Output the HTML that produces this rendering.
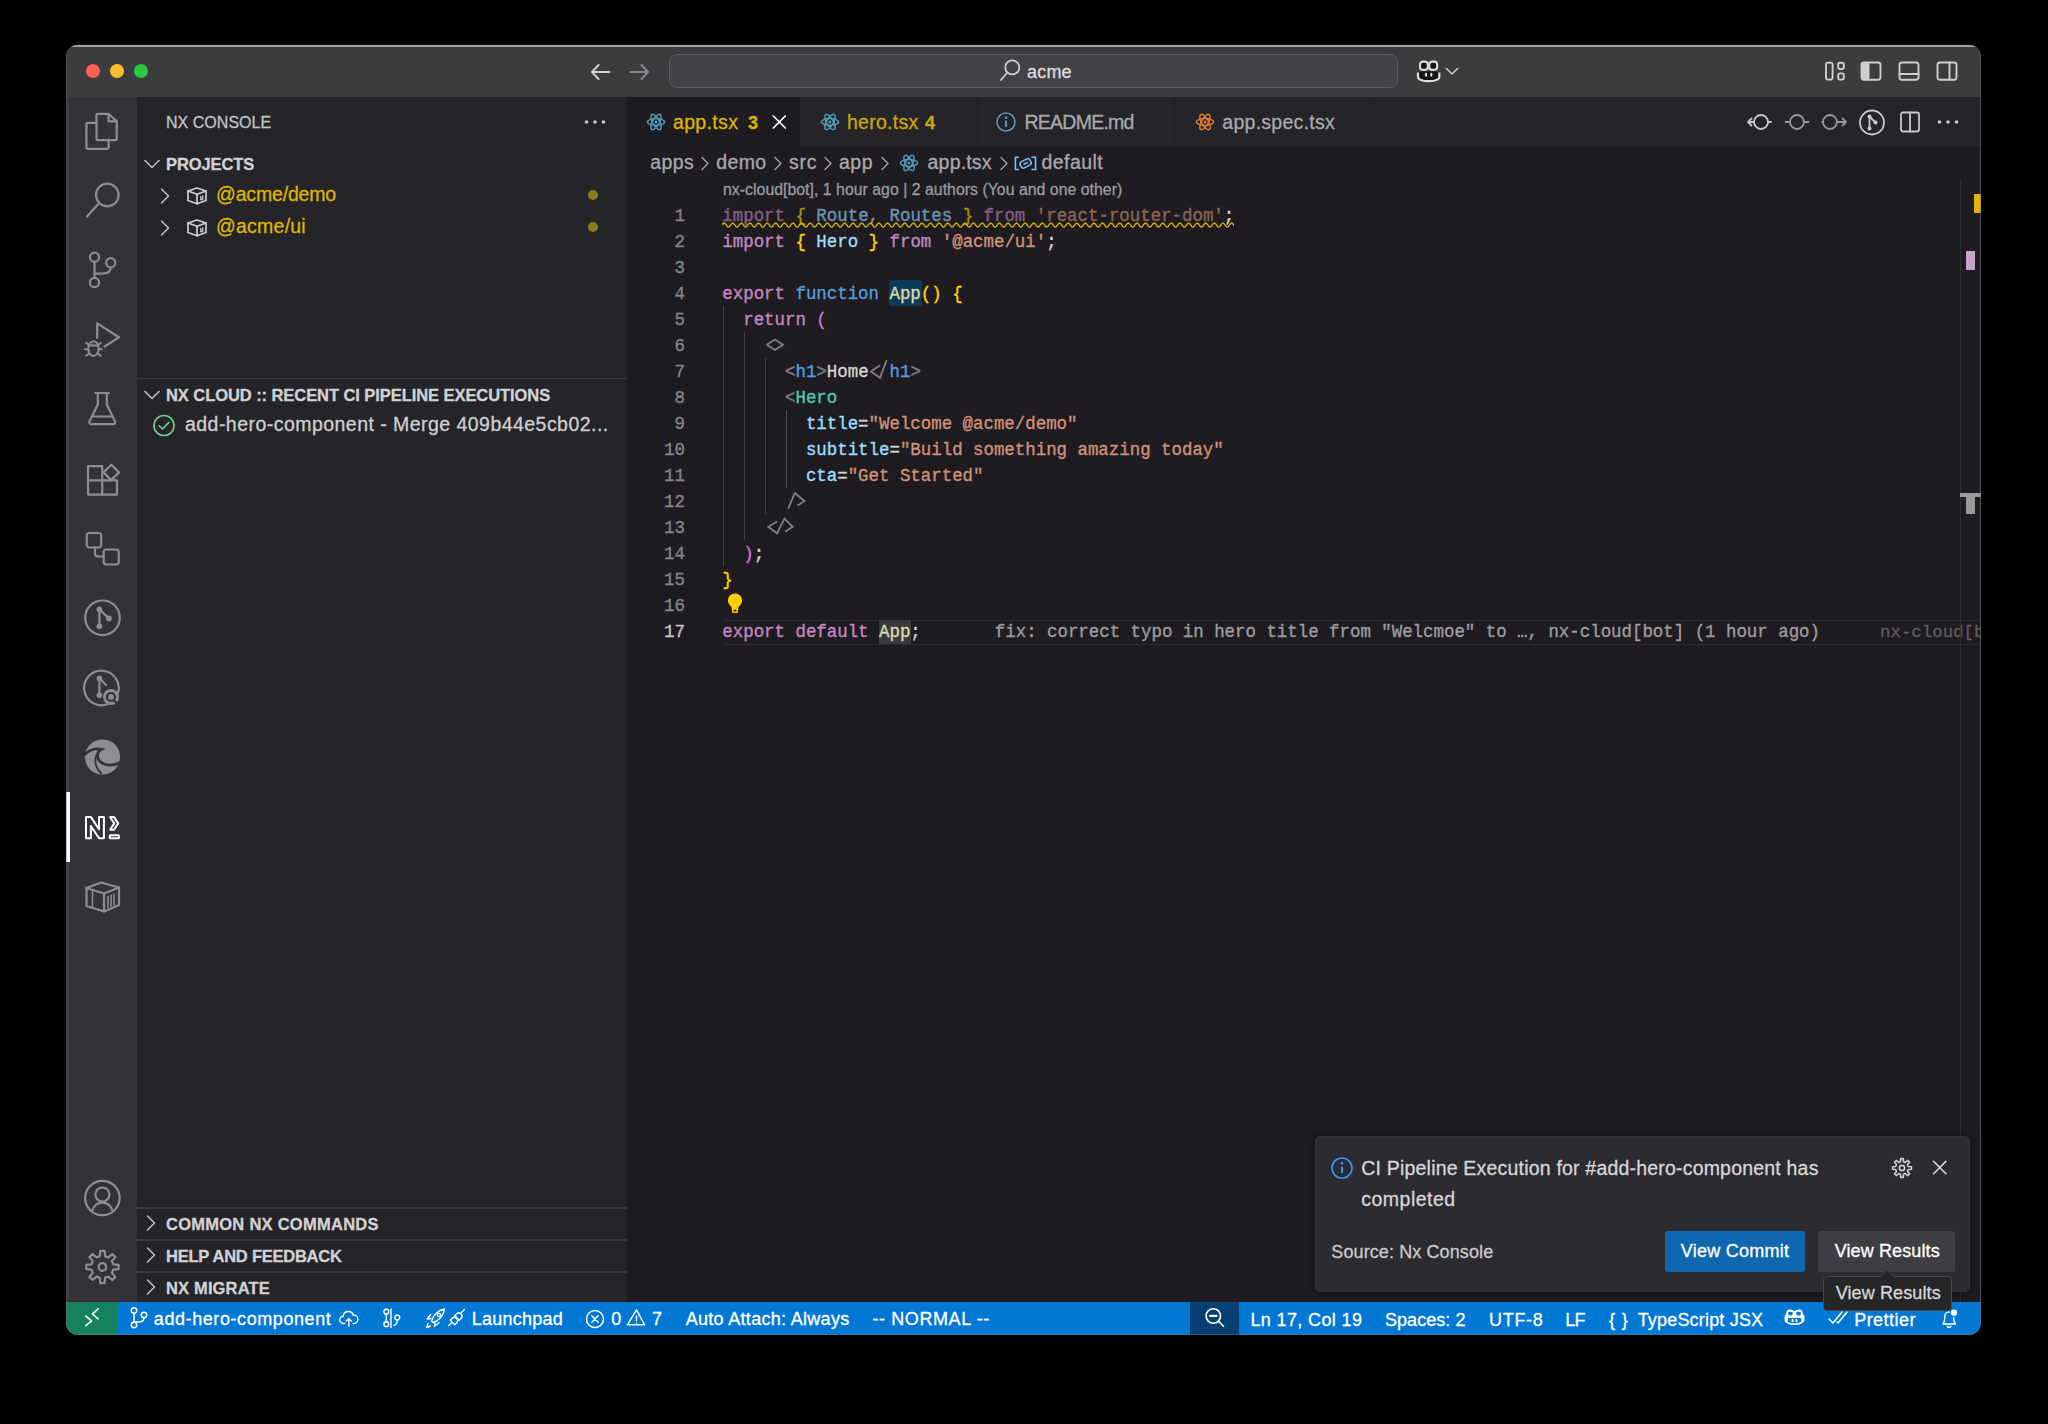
<!DOCTYPE html><html><head><meta charset="utf-8"><style>
html,body{margin:0;padding:0}
body{width:2048px;height:1424px;background:#000;overflow:hidden;position:relative;font-family:"Liberation Sans",sans-serif}
#win{position:absolute;left:0;top:0;width:2048px;height:1424px;clip-path:inset(44.8px 67px 89px 66px round 12px)}
.a{position:absolute}
.t{position:absolute;white-space:pre;line-height:1;-webkit-text-stroke:0.3px currentColor}
.m{-webkit-text-stroke:0.35px currentColor}
.m span{-webkit-text-stroke:0.35px currentColor}
</style></head><body><div id="win">
<div class="a" style="left:66px;top:44px;width:1915px;height:53px;background:#3c3b3e;"></div>
<div class="a" style="left:66px;top:97px;width:71px;height:1205px;background:#343236;"></div>
<div class="a" style="left:137px;top:97px;width:490px;height:1205px;background:#252428;"></div>
<div class="a" style="left:627px;top:97px;width:1354px;height:1205px;background:#1e1c20;"></div>
<div class="a" style="left:627px;top:97px;width:1354px;height:50px;background:#252428;"></div>
<div class="a" style="left:66px;top:44.8px;width:1915px;height:2.200000000000003px;background:#9e9da1;"></div>
<svg class="a" style="left:85px;top:63px;" width="16" height="16" viewBox="0 0 16 16" fill="none"><circle cx="8" cy="8" r="7" fill="#ff5f57"/></svg>
<svg class="a" style="left:109px;top:63px;" width="16" height="16" viewBox="0 0 16 16" fill="none"><circle cx="8" cy="8" r="7" fill="#febc2e"/></svg>
<svg class="a" style="left:133px;top:63px;" width="16" height="16" viewBox="0 0 16 16" fill="none"><circle cx="8" cy="8" r="7" fill="#28c840"/></svg>
<svg class="a" style="left:588px;top:60px;" width="26" height="24" viewBox="0 0 26 24" fill="none"><g stroke="#d0d0d2" stroke-width="2.0" stroke-linecap="round" stroke-linejoin="round" fill="none"><path d="M4 12H21.5M4 12L10.5 5M4 12L10.5 19"/></g></svg>
<svg class="a" style="left:626px;top:60px;" width="26" height="24" viewBox="0 0 26 24" fill="none"><g stroke="#8a898d" stroke-width="2.0" stroke-linecap="round" stroke-linejoin="round" fill="none"><path d="M22 12H4.5M22 12L15.5 5M22 12L15.5 19"/></g></svg>
<div class="a" style="left:669px;top:54px;width:727px;height:32px;border-radius:8px;background:#434246;border:1.5px solid #5b5a5f"></div>
<svg class="a" style="left:998px;top:57px;" width="24" height="26" viewBox="0 0 24 26" fill="none"><g stroke="#cfcfd1" stroke-width="1.8" stroke-linecap="round" stroke-linejoin="round" fill="none"><circle cx="14.3" cy="10.4" r="7"/><path d="M9.3 15.5L3 23"/></g></svg>
<div id="t6c20286c" class="t" style="left:1027.00px;top:62.96px;font-size:18px;color:#dededf;font-weight:400;font-family:'Liberation Sans',sans-serif;letter-spacing:0.195px;">acme</div>
<svg class="a" style="left:1414px;top:58px;" width="30" height="26" viewBox="0 0 30 26" fill="none"><path d="M4 14.5V19.2C4 21.2 8.5 23.2 14.6 23.2S25.3 21.2 25.3 19.2V14.5" stroke="#dcdcde" stroke-width="2.2" fill="#151517"/>
<path d="M6 13.5H23.3V20c-2 1.3-5 2-8.65 2S8 21.3 6 20z" fill="#151517"/>
<rect x="6" y="3.6" width="7.8" height="8.3" rx="2.8" stroke="#dcdcde" stroke-width="2.1" fill="#151517"/>
<rect x="15.3" y="3.6" width="7.8" height="8.3" rx="2.8" stroke="#dcdcde" stroke-width="2.1" fill="#151517"/>
<rect x="10.9" y="14.8" width="2.1" height="4" rx="1" fill="#dcdcde"/><rect x="16.3" y="14.8" width="2.1" height="4" rx="1" fill="#dcdcde"/></svg>
<svg class="a" style="left:1444px;top:64px;" width="16" height="14" viewBox="0 0 16 14" fill="none"><g stroke="#c8c8ca" stroke-width="1.6" stroke-linecap="round" stroke-linejoin="round" fill="none"><path d="M2.5 4.5L8 10L13.5 4.5"/></g></svg>
<svg class="a" style="left:1822px;top:58px;" width="26" height="26" viewBox="0 0 26 26" fill="none"><g stroke="#cfcfd1" stroke-width="1.9" stroke-linecap="round" stroke-linejoin="round" fill="none"><rect x="4" y="4.6" width="6.6" height="17" rx="2"/><rect x="16.2" y="4.8" width="5.6" height="6.2" rx="1.8"/><rect x="16.2" y="15.4" width="5.6" height="6.2" rx="1.8"/></g></svg>
<svg class="a" style="left:1858px;top:58px;" width="26" height="26" viewBox="0 0 26 26" fill="none"><rect x="3.5" y="4.5" width="19" height="17.2" rx="2.5" stroke="#cfcfd1" stroke-width="1.9"/><rect x="3.5" y="4.5" width="8" height="17.2" rx="2" fill="#cfcfd1"/></svg>
<svg class="a" style="left:1896px;top:58px;" width="26" height="26" viewBox="0 0 26 26" fill="none"><g stroke="#cfcfd1" stroke-width="1.9" stroke-linecap="round" stroke-linejoin="round" fill="none"><rect x="3.5" y="4.5" width="19" height="17.2" rx="2.5"/><path d="M3.5 16H22.5"/></g></svg>
<svg class="a" style="left:1934px;top:58px;" width="26" height="26" viewBox="0 0 26 26" fill="none"><g stroke="#cfcfd1" stroke-width="1.9" stroke-linecap="round" stroke-linejoin="round" fill="none"><rect x="3.5" y="4.5" width="19" height="17.2" rx="2.5"/><path d="M15.5 4.5V21.7"/></g></svg>
<div class="a" style="left:66px;top:97px;width:1px;height:1205px;background:#0c0c0d;"></div>
<div class="a" style="left:67px;top:97px;width:2px;height:1205px;background:#403f43;"></div>
<div class="a" style="left:1979.5px;top:97px;width:1.5px;height:1205px;background:#3a393d;"></div>
<svg class="a" style="left:82px;top:111px;" width="40" height="40" viewBox="0 0 40 40" fill="none"><g stroke="#8e8d91" stroke-width="2.2" stroke-linecap="round" stroke-linejoin="round" fill="none"><path d="M14.5 10.3V4a1.2 1.2 0 0 1 1.2-1.2h10.8l8.2 7.6v17.6a1.2 1.2 0 0 1-1.2 1.2H15.7a1.2 1.2 0 0 1-1.2-1.2z"/><path d="M26.5 3v7.3h8"/><path d="M14.5 11.8H5.6a1.2 1.2 0 0 0-1.2 1.2v23.6a1.2 1.2 0 0 0 1.2 1.2h19.8a1.2 1.2 0 0 0 1.2-1.2v-7.9"/></g></svg>
<svg class="a" style="left:82px;top:180px;" width="40" height="40" viewBox="0 0 40 40" fill="none"><g stroke="#8e8d91" stroke-width="2.2" stroke-linecap="round" stroke-linejoin="round" fill="none"><circle cx="25.3" cy="15" r="11.3"/><path d="M17.3 23L5 36.5"/></g></svg>
<svg class="a" style="left:82px;top:250px;" width="40" height="40" viewBox="0 0 40 40" fill="none"><g stroke="#8e8d91" stroke-width="2.2" stroke-linecap="round" stroke-linejoin="round" fill="none"><circle cx="12.5" cy="7.3" r="4.6"/><circle cx="12.5" cy="32.5" r="4.6"/><circle cx="28.7" cy="12.7" r="4.6"/><path d="M12.5 11.9V27.9"/><path d="M28.7 17.3c0 5-3.5 6.3-8 6.3h-8"/></g></svg>
<svg class="a" style="left:82px;top:319px;" width="40" height="40" viewBox="0 0 40 40" fill="none"><g stroke="#8e8d91" stroke-width="2.2" stroke-linecap="round" stroke-linejoin="round" fill="none"><path d="M15.2 19V4.4L37 18.3L22.6 27.5"/><g stroke-width="2"><ellipse cx="11.5" cy="29.6" rx="5.2" ry="7.3"/><path d="M6.5 26.6H16.5M4.2 23.8L7 26.2M18.8 23.8L16 26.2M3 30.2H6.3M16.7 30.2H20M4.2 36.8L7 34.4M18.8 36.8L16 34.4"/></g></g></svg>
<svg class="a" style="left:82px;top:389px;" width="40" height="40" viewBox="0 0 40 40" fill="none"><g stroke="#8e8d91" stroke-width="2.2" stroke-linecap="round" stroke-linejoin="round" fill="none"><path d="M13.5 4H27"/><path d="M15.8 4V15.5L7.5 32.5a1.8 1.8 0 0 0 1.6 2.6h22.3a1.8 1.8 0 0 0 1.6-2.6L24.8 15.5V4"/><path d="M11 27.5H29.5"/></g></svg>
<svg class="a" style="left:82px;top:458px;" width="40" height="40" viewBox="0 0 40 40" fill="none"><g stroke="#8e8d91" stroke-width="2.2" stroke-linecap="round" stroke-linejoin="round" fill="none"><path d="M6 8.1H20.2V36.6H6Z"/><path d="M6 22.3H35V36.6H20.2"/><path d="M29.3 6.7L37 14.4L29.3 22.1L21.6 14.4Z"/></g></svg>
<svg class="a" style="left:82px;top:528px;" width="40" height="40" viewBox="0 0 40 40" fill="none"><g stroke="#8e8d91" stroke-width="2.2" stroke-linecap="round" stroke-linejoin="round" fill="none"><rect x="4.7" y="5" width="14.5" height="14.5" rx="2.5"/><rect x="21.7" y="21.5" width="15" height="15" rx="2.5"/><path d="M13 19.5v6a3 3 0 0 0 3 3h5.7"/></g></svg>
<svg class="a" style="left:82px;top:597px;" width="40" height="40" viewBox="0 0 40 40" fill="none"><g stroke="#8e8d91" stroke-width="2.2" stroke-linecap="round" stroke-linejoin="round" fill="none"><circle cx="20.5" cy="20.8" r="17.3"/><path d="M17.4 12.3V29.3M17.4 12.3L26.9 21.4"/><circle cx="17.4" cy="12.3" r="2.9" fill="#8e8d91" stroke="none"/><circle cx="17.4" cy="29.3" r="2.9" fill="#8e8d91" stroke="none"/><circle cx="26.9" cy="21.4" r="2.9" fill="#8e8d91" stroke="none"/></g></svg>
<svg class="a" style="left:82px;top:667px;" width="40" height="40" viewBox="0 0 40 40" fill="none"><g stroke="#8e8d91" stroke-width="2.2" stroke-linecap="round" stroke-linejoin="round" fill="none"><path d="M36 26A17.3 17.3 0 1 0 26 37"/><path d="M17.4 11.3V28.3M17.4 11.3L24 18"/><circle cx="17.4" cy="11.3" r="2.8" fill="#8e8d91" stroke="none"/><circle cx="17.4" cy="28.3" r="2.8" fill="#8e8d91" stroke="none"/><circle cx="29" cy="30" r="8" fill="#8e8d91" stroke="none"/><circle cx="29" cy="30" r="4" stroke="#333236" stroke-width="2.2"/><path d="M31.5 33L34 35.5" stroke="#333236"/></g></svg>
<svg class="a" style="left:82px;top:737px;" width="40" height="40" viewBox="0 0 40 40" fill="none"><circle cx="20.5" cy="20" r="17.6" fill="#8e8d91"/><path d="M2.2 18C7 12.8 14 11 19.5 12.3C15 14.5 13.8 20.5 18 24.5C22.5 28.8 31 29.5 38 25.5" stroke="#343236" stroke-width="2.8" fill="none"/><path d="M14.6 17.5C12 24 13.5 31.5 19.5 36.5" stroke="#343236" stroke-width="1.8" fill="none"/></svg>
<div class="a" style="left:66px;top:792px;width:4px;height:70px;background:#ffffff;"></div>
<svg class="a" style="left:82px;top:807px;" width="40" height="40" viewBox="0 0 40 40" fill="none"><g fill="none" stroke="#ffffff" stroke-width="2" stroke-linejoin="round"><path d="M4 10.1H9L17 22.2V10.1H21.9V31.2H17L8.9 19V31.2H4Z"/><path d="M28.1 10.1H32L36.2 16.4L32 22.8H28.1L32.3 16.4Z"/><rect x="27.7" y="28.3" width="9.2" height="3" rx="0.6"/></g></svg>
<svg class="a" style="left:82px;top:877px;" width="40" height="40" viewBox="0 0 40 40" fill="none"><g stroke="#8e8d91" stroke-width="2.2" stroke-linecap="round" stroke-linejoin="round" fill="none"><path d="M4.5 11L19 5.5L37 10.5V28L22 34.5L4.5 29Z"/><path d="M4.5 11L22 16.5V34.5M22 16.5L37 10.5"/><path d="M10.5 13v17.5M26 19.5v11M29 18.3v11M32 17v11" stroke-width="1.6"/></g></svg>
<svg class="a" style="left:82px;top:1177.5px;" width="40" height="40" viewBox="0 0 40 40" fill="none"><g stroke="#8e8d91" stroke-width="2.2" stroke-linecap="round" stroke-linejoin="round" fill="none"><circle cx="20.4" cy="20" r="17.2"/><circle cx="20.4" cy="16.5" r="7"/><path d="M10.2 32.5c1.8-4.3 5.5-7.8 10.2-7.8s8.4 3.5 10.2 7.8"/></g></svg>
<svg class="a" style="left:82px;top:1247px;" width="40" height="40" viewBox="0 0 40 40" fill="none"><g stroke="#8e8d91" stroke-width="2.2" stroke-linecap="round" stroke-linejoin="round" fill="none"><path d="M17.79 9.11 L18.23 3.85 L22.57 3.85 L23.01 9.11 L26.25 10.45 L30.29 7.04 L33.36 10.11 L29.95 14.15 L31.29 17.39 L36.55 17.83 L36.55 22.17 L31.29 22.61 L29.95 25.85 L33.36 29.89 L30.29 32.96 L26.25 29.55 L23.01 30.89 L22.57 36.15 L18.23 36.15 L17.79 30.89 L14.55 29.55 L10.51 32.96 L7.44 29.89 L10.85 25.85 L9.51 22.61 L4.25 22.17 L4.25 17.83 L9.51 17.39 L10.85 14.15 L7.44 10.11 L10.51 7.04 L14.55 10.45Z"/><circle cx="20.4" cy="20" r="3.8"/></g></svg>
<div id="t7645a025" class="t" style="left:166.00px;top:115.36px;font-size:16px;color:#c2c2c5;font-weight:400;font-family:'Liberation Sans',sans-serif;letter-spacing:0.031px;">NX CONSOLE</div>
<svg class="a" style="left:583px;top:116px;" width="24" height="12" viewBox="0 0 24 12" fill="none"><g fill="#c8c8ca"><circle cx="3.5" cy="6" r="1.8"/><circle cx="12" cy="6" r="1.8"/><circle cx="20.5" cy="6" r="1.8"/></g></svg>
<svg class="a" style="left:143px;top:157px;" width="18" height="14" viewBox="0 0 18 14" fill="none"><g stroke="#c4c4c6" stroke-width="1.5" stroke-linecap="round" stroke-linejoin="round" fill="none"><path d="M2 3.5L9 10.5L16 3.5"/></g></svg>
<div id="tb21f6e4a" class="t" style="left:166.00px;top:155.93px;font-size:16.5px;color:#d2d2d5;font-weight:700;font-family:'Liberation Sans',sans-serif;letter-spacing:-0.105px;">PROJECTS</div>
<svg class="a" style="left:158px;top:186.5px;" width="14" height="18" viewBox="0 0 14 18" fill="none"><g stroke="#c4c4c6" stroke-width="1.5" stroke-linecap="round" stroke-linejoin="round" fill="none"><path d="M3.5 2L10.5 9L3.5 16"/></g></svg>
<svg class="a" style="left:185px;top:185px;" width="24" height="22" viewBox="0 0 24 22" fill="none"><g stroke="#d0d0d2" stroke-width="1.7" stroke-linecap="round" stroke-linejoin="round" fill="none"><path d="M3 6L12 3L21 6V15.5L12 18.8L3 15.5Z"/><path d="M3 6L12 9.3V18.8M12 9.3L21 6"/><path d="M15.8 11.5v3.3l2-.7v-3.3" stroke-width="1.3"/></g></svg>
<div id="t5906ea2d" class="t" style="left:216.00px;top:185.29px;font-size:19.5px;color:#dcb40a;font-weight:400;font-family:'Liberation Sans',sans-serif;letter-spacing:-0.165px;">@acme/demo</div>
<svg class="a" style="left:587px;top:189px;" width="12" height="12" viewBox="0 0 12 12" fill="none"><circle cx="6" cy="6" r="5" fill="#8c7a1e"/></svg>
<svg class="a" style="left:158px;top:218.5px;" width="14" height="18" viewBox="0 0 14 18" fill="none"><g stroke="#c4c4c6" stroke-width="1.5" stroke-linecap="round" stroke-linejoin="round" fill="none"><path d="M3.5 2L10.5 9L3.5 16"/></g></svg>
<svg class="a" style="left:185px;top:217px;" width="24" height="22" viewBox="0 0 24 22" fill="none"><g stroke="#d0d0d2" stroke-width="1.7" stroke-linecap="round" stroke-linejoin="round" fill="none"><path d="M3 6L12 3L21 6V15.5L12 18.8L3 15.5Z"/><path d="M3 6L12 9.3V18.8M12 9.3L21 6"/><path d="M15.8 11.5v3.3l2-.7v-3.3" stroke-width="1.3"/></g></svg>
<div id="tc8ace0af" class="t" style="left:216.00px;top:217.29px;font-size:19.5px;color:#dcb40a;font-weight:400;font-family:'Liberation Sans',sans-serif;letter-spacing:0.232px;">@acme/ui</div>
<svg class="a" style="left:587px;top:221px;" width="12" height="12" viewBox="0 0 12 12" fill="none"><circle cx="6" cy="6" r="5" fill="#8c7a1e"/></svg>
<div class="a" style="left:137px;top:377.5px;width:490px;height:1.5px;background:#3b3a3e;"></div>
<svg class="a" style="left:143px;top:388px;" width="18" height="14" viewBox="0 0 18 14" fill="none"><g stroke="#c4c4c6" stroke-width="1.5" stroke-linecap="round" stroke-linejoin="round" fill="none"><path d="M2 3.5L9 10.5L16 3.5"/></g></svg>
<div id="tf132e27e" class="t" style="left:166.00px;top:386.93px;font-size:16.5px;color:#d2d2d5;font-weight:700;font-family:'Liberation Sans',sans-serif;letter-spacing:-0.067px;">NX CLOUD :: RECENT CI PIPELINE EXECUTIONS</div>
<svg class="a" style="left:152px;top:413px;" width="24" height="24" viewBox="0 0 24 24" fill="none"><g stroke="#73c991" stroke-width="1.7" stroke-linecap="round" stroke-linejoin="round" fill="none"><circle cx="12" cy="12.5" r="10"/><path d="M7.3 12.8L10.6 16L16.8 9.3"/></g></svg>
<div id="tad2a1422" class="t" style="left:185.00px;top:414.79px;font-size:19.5px;color:#cfcfd2;font-weight:400;font-family:'Liberation Sans',sans-serif;letter-spacing:0.460px;">add-hero-component - Merge 409b44e5cb02...</div>
<div class="a" style="left:137px;top:1207px;width:490px;height:1.5px;background:#3b3a3e;"></div>
<svg class="a" style="left:144px;top:1214px;" width="14" height="18" viewBox="0 0 14 18" fill="none"><g stroke="#c4c4c6" stroke-width="1.5" stroke-linecap="round" stroke-linejoin="round" fill="none"><path d="M3.5 2L10.5 9L3.5 16"/></g></svg>
<div id="tb769990c" class="t" style="left:166.00px;top:1216.03px;font-size:16.5px;color:#d2d2d5;font-weight:700;font-family:'Liberation Sans',sans-serif;letter-spacing:0.260px;">COMMON NX COMMANDS</div>
<div class="a" style="left:137px;top:1239px;width:490px;height:1.5px;background:#3b3a3e;"></div>
<svg class="a" style="left:144px;top:1246px;" width="14" height="18" viewBox="0 0 14 18" fill="none"><g stroke="#c4c4c6" stroke-width="1.5" stroke-linecap="round" stroke-linejoin="round" fill="none"><path d="M3.5 2L10.5 9L3.5 16"/></g></svg>
<div id="t3e36f86e" class="t" style="left:166.00px;top:1248.03px;font-size:16.5px;color:#d2d2d5;font-weight:700;font-family:'Liberation Sans',sans-serif;letter-spacing:-0.237px;">HELP AND FEEDBACK</div>
<div class="a" style="left:137px;top:1271px;width:490px;height:1.5px;background:#3b3a3e;"></div>
<svg class="a" style="left:144px;top:1278px;" width="14" height="18" viewBox="0 0 14 18" fill="none"><g stroke="#c4c4c6" stroke-width="1.5" stroke-linecap="round" stroke-linejoin="round" fill="none"><path d="M3.5 2L10.5 9L3.5 16"/></g></svg>
<div id="t8cb08ec0" class="t" style="left:166.00px;top:1280.03px;font-size:16.5px;color:#d2d2d5;font-weight:700;font-family:'Liberation Sans',sans-serif;letter-spacing:0.158px;">NX MIGRATE</div>
<div class="a" style="left:627px;top:147px;width:1354px;height:1px;background:#1e1c20;"></div>
<div class="a" style="left:627px;top:97px;width:173px;height:50px;background:#1e1c20;"></div>
<div class="a" style="left:800px;top:97px;width:177px;height:50px;background:#252428;"></div>
<div class="a" style="left:977px;top:97px;width:1px;height:50px;background:#1f1e22;"></div>
<div class="a" style="left:978px;top:97px;width:196px;height:50px;background:#252428;"></div>
<div class="a" style="left:1174px;top:97px;width:1px;height:50px;background:#1f1e22;"></div>
<div class="a" style="left:1175px;top:97px;width:198px;height:50px;background:#252428;"></div>
<div class="a" style="left:1373px;top:97px;width:1px;height:50px;background:#1f1e22;"></div>
<svg class="a" style="left:645px;top:111px;" width="22" height="22" viewBox="0 0 22 22" fill="none"><g stroke="#519aba" stroke-width="1.5" fill="none"><ellipse cx="11" cy="11" rx="8.6" ry="3.4"/><ellipse cx="11" cy="11" rx="8.6" ry="3.4" transform="rotate(60 11 11)"/><ellipse cx="11" cy="11" rx="8.6" ry="3.4" transform="rotate(120 11 11)"/></g><circle cx="11" cy="11" r="1.5" fill="#519aba"/></svg>
<div id="tf3c806f1" class="t" style="left:673.00px;top:112.69px;font-size:19.5px;color:#dcb40a;font-weight:400;font-family:'Liberation Sans',sans-serif;letter-spacing:0.338px;">app.tsx</div>
<div id="tc97541cb" class="t" style="left:748.00px;top:113.96px;font-size:18px;color:#dcb40a;font-weight:700;font-family:'Liberation Sans',sans-serif;letter-spacing:1.684px;">3</div>
<svg class="a" style="left:771px;top:114px;" width="16" height="16" viewBox="0 0 16 16" fill="none"><g stroke="#ffffff" stroke-width="1.7" stroke-linecap="round" stroke-linejoin="round" fill="none"><path d="M2.3 2L14.3 14M14.3 2L2.3 14"/></g></svg>
<svg class="a" style="left:819px;top:111px;" width="22" height="22" viewBox="0 0 22 22" fill="none"><g stroke="#519aba" stroke-width="1.5" fill="none"><ellipse cx="11" cy="11" rx="8.6" ry="3.4"/><ellipse cx="11" cy="11" rx="8.6" ry="3.4" transform="rotate(60 11 11)"/><ellipse cx="11" cy="11" rx="8.6" ry="3.4" transform="rotate(120 11 11)"/></g><circle cx="11" cy="11" r="1.5" fill="#519aba"/></svg>
<div id="t59557220" class="t" style="left:847.00px;top:112.69px;font-size:19.5px;color:#c9a80e;font-weight:400;font-family:'Liberation Sans',sans-serif;letter-spacing:0.261px;">hero.tsx</div>
<div id="t4212ce7a" class="t" style="left:925.00px;top:113.96px;font-size:18px;color:#c9a80e;font-weight:700;font-family:'Liberation Sans',sans-serif;letter-spacing:1.684px;">4</div>
<svg class="a" style="left:995px;top:111px;" width="22" height="22" viewBox="0 0 22 22" fill="none"><circle cx="11" cy="11" r="9" stroke="#519aba" stroke-width="1.6"/><circle cx="11" cy="6.6" r="1.3" fill="#519aba"/><path d="M11 9.5V16" stroke="#519aba" stroke-width="2"/></svg>
<div id="t85dfa074" class="t" style="left:1024.50px;top:112.69px;font-size:19.5px;color:#a9a9ac;font-weight:400;font-family:'Liberation Sans',sans-serif;letter-spacing:-0.755px;">README.md</div>
<svg class="a" style="left:1194px;top:111px;" width="22" height="22" viewBox="0 0 22 22" fill="none"><g stroke="#e37933" stroke-width="1.5" fill="none"><ellipse cx="11" cy="11" rx="8.6" ry="3.4"/><ellipse cx="11" cy="11" rx="8.6" ry="3.4" transform="rotate(60 11 11)"/><ellipse cx="11" cy="11" rx="8.6" ry="3.4" transform="rotate(120 11 11)"/></g><circle cx="11" cy="11" r="1.5" fill="#e37933"/></svg>
<div id="tacf844b7" class="t" style="left:1222.30px;top:112.69px;font-size:19.5px;color:#a9a9ac;font-weight:400;font-family:'Liberation Sans',sans-serif;letter-spacing:0.274px;">app.spec.tsx</div>
<svg class="a" style="left:1744px;top:110px;" width="30" height="24" viewBox="0 0 30 24" fill="none"><g stroke="#c8c8ca" stroke-width="1.8" stroke-linecap="round" stroke-linejoin="round" fill="none"><circle cx="17" cy="12" r="7"/><path d="M10 12H4M4 12L7.5 8.5M4 12L7.5 15.5M24 12h3"/></g></svg>
<svg class="a" style="left:1783px;top:110px;" width="28" height="24" viewBox="0 0 28 24" fill="none"><g stroke="#97969a" stroke-width="1.8" stroke-linecap="round" stroke-linejoin="round" fill="none"><circle cx="14" cy="12" r="7"/><path d="M2.5 12H7M21 12h4.5"/></g></svg>
<svg class="a" style="left:1820px;top:110px;" width="30" height="24" viewBox="0 0 30 24" fill="none"><g stroke="#97969a" stroke-width="1.8" stroke-linecap="round" stroke-linejoin="round" fill="none"><circle cx="10" cy="12" r="7"/><path d="M17 12H26M26 12L22.5 8.5M26 12L22.5 15.5M3 12h-1"/></g></svg>
<svg class="a" style="left:1858px;top:109px;" width="28" height="28" viewBox="0 0 28 28" fill="none"><g stroke="#c8c8ca" stroke-width="1.8" stroke-linecap="round" stroke-linejoin="round" fill="none"><circle cx="14" cy="13.5" r="12"/><path d="M11.5 7.5V19.5M11.5 7.5L17.5 13.5"/><circle cx="11.5" cy="7.5" r="2" fill="#c8c8ca" stroke="none"/><circle cx="11.5" cy="19.5" r="2" fill="#c8c8ca" stroke="none"/><circle cx="17.5" cy="13.5" r="2" fill="#c8c8ca" stroke="none"/></g></svg>
<svg class="a" style="left:1898px;top:110px;" width="24" height="24" viewBox="0 0 24 24" fill="none"><g stroke="#c8c8ca" stroke-width="1.8" stroke-linecap="round" stroke-linejoin="round" fill="none"><rect x="3" y="2.5" width="18" height="19" rx="2"/><path d="M12 2.5V21.5"/></g></svg>
<svg class="a" style="left:1936px;top:116px;" width="24" height="12" viewBox="0 0 24 12" fill="none"><g fill="#c8c8ca"><circle cx="3.5" cy="6" r="1.8"/><circle cx="12" cy="6" r="1.8"/><circle cx="20.5" cy="6" r="1.8"/></g></svg>
<div id="tec7b3b60" class="t" style="left:650.30px;top:152.89px;font-size:19.5px;color:#a9a9ac;font-weight:400;font-family:'Liberation Sans',sans-serif;letter-spacing:0.368px;">apps</div>
<svg class="a" style="left:699px;top:155px;" width="12" height="17" viewBox="0 0 12 17" fill="none"><g stroke="#a0a0a3" stroke-width="1.5" stroke-linecap="round" stroke-linejoin="round" fill="none"><path d="M3 2.5L9 8.5L3 14.5"/></g></svg>
<svg class="a" style="left:771.8px;top:155px;" width="12" height="17" viewBox="0 0 12 17" fill="none"><g stroke="#a0a0a3" stroke-width="1.5" stroke-linecap="round" stroke-linejoin="round" fill="none"><path d="M3 2.5L9 8.5L3 14.5"/></g></svg>
<svg class="a" style="left:821.6px;top:155px;" width="12" height="17" viewBox="0 0 12 17" fill="none"><g stroke="#a0a0a3" stroke-width="1.5" stroke-linecap="round" stroke-linejoin="round" fill="none"><path d="M3 2.5L9 8.5L3 14.5"/></g></svg>
<svg class="a" style="left:878.5px;top:155px;" width="12" height="17" viewBox="0 0 12 17" fill="none"><g stroke="#a0a0a3" stroke-width="1.5" stroke-linecap="round" stroke-linejoin="round" fill="none"><path d="M3 2.5L9 8.5L3 14.5"/></g></svg>
<svg class="a" style="left:998px;top:155px;" width="12" height="17" viewBox="0 0 12 17" fill="none"><g stroke="#a0a0a3" stroke-width="1.5" stroke-linecap="round" stroke-linejoin="round" fill="none"><path d="M3 2.5L9 8.5L3 14.5"/></g></svg>
<div id="t055ff5d8" class="t" style="left:716.20px;top:152.89px;font-size:19.5px;color:#a9a9ac;font-weight:400;font-family:'Liberation Sans',sans-serif;letter-spacing:0.406px;">demo</div>
<div id="t93f76353" class="t" style="left:788.90px;top:152.89px;font-size:19.5px;color:#a9a9ac;font-weight:400;font-family:'Liberation Sans',sans-serif;letter-spacing:0.800px;">src</div>
<div id="tccf698ed" class="t" style="left:839.00px;top:152.89px;font-size:19.5px;color:#a9a9ac;font-weight:400;font-family:'Liberation Sans',sans-serif;letter-spacing:0.527px;">app</div>
<svg class="a" style="left:898px;top:152px;" width="22" height="22" viewBox="0 0 22 22" fill="none"><g stroke="#519aba" stroke-width="1.5" fill="none"><ellipse cx="11" cy="11" rx="8.6" ry="3.4"/><ellipse cx="11" cy="11" rx="8.6" ry="3.4" transform="rotate(60 11 11)"/><ellipse cx="11" cy="11" rx="8.6" ry="3.4" transform="rotate(120 11 11)"/></g><circle cx="11" cy="11" r="1.5" fill="#519aba"/></svg>
<div id="t5af0d044" class="t" style="left:927.60px;top:152.89px;font-size:19.5px;color:#a9a9ac;font-weight:400;font-family:'Liberation Sans',sans-serif;letter-spacing:0.171px;">app.tsx</div>
<svg class="a" style="left:1013px;top:153px;" width="26" height="20" viewBox="0 0 26 20" fill="none"><g stroke="#75beff" stroke-width="1.6" fill="none"><path d="M5.8 4.2H2.4V16.5H5.8M18.4 4.2H22.6V16.5H18.4"/><g transform="rotate(-28 12.6 10.4)"><rect x="7.2" y="7" width="10.8" height="6.8" rx="2.2"/><path d="M10.2 10.4H15.2"/></g></g></svg>
<div id="t40199052" class="t" style="left:1041.60px;top:152.89px;font-size:19.5px;color:#a9a9ac;font-weight:400;font-family:'Liberation Sans',sans-serif;letter-spacing:0.406px;">default</div>
<div id="t8fe82009" class="t" style="left:723.00px;top:182.43px;font-size:15.8px;color:#9b9b9e;font-weight:400;font-family:'Liberation Sans',sans-serif;letter-spacing:0.040px;">nx-cloud[bot], 1 hour ago | 2 authors (You and one other)</div>
<div class="a" style="left:723px;top:619.88px;width:1258px;height:23px;border-top:1.5px solid #2c2b2f;border-bottom:1.5px solid #2c2b2f"></div>
<div class="a" style="left:878.5px;top:619.9px;width:32.5px;height:24.5px;background:#3a393d;"></div>
<div class="a" style="left:889px;top:279.5px;width:32.5px;height:26.0px;background:#0e3a5a;"></div>
<div class="a" style="left:722.9px;top:306.0px;width:1.6000000000000227px;height:260.29999999999995px;background:#3f3e42;"></div>
<div class="a" style="left:743.8px;top:332.1px;width:1.6000000000000227px;height:208.19999999999993px;background:#3f3e42;"></div>
<div class="a" style="left:764.7px;top:358.1px;width:1.599999999999909px;height:156.10000000000002px;background:#3f3e42;"></div>
<div class="a" style="left:785.6px;top:410.1px;width:1.6000000000000227px;height:78.09999999999997px;background:#4c4b4f;"></div>
<div id="te8eb6d22" class="t m" style="left:674.55px;top:207.54px;font-size:17.42px;color:#858588;font-weight:400;font-family:'Liberation Mono',monospace;transform:scaleY(1.1);transform-origin:0 13.36px;">1</div>
<div id="tfaa9abe1" class="t m" style="left:722.30px;top:207.54px;font-size:17.42px;color:#d4d4d4;font-weight:400;font-family:'Liberation Mono',monospace;transform:scaleY(1.1);transform-origin:0 13.36px;"><span style="opacity:0.62"><span style="color:#c586c0">import</span><span style="color:#d4d4d4"> </span><span style="color:#ffd700">{</span><span style="color:#d4d4d4"> </span><span style="color:#9cdcfe">Route</span><span style="color:#d4d4d4">,</span><span style="color:#d4d4d4"> </span><span style="color:#9cdcfe">Routes</span><span style="color:#d4d4d4"> </span><span style="color:#ffd700">}</span><span style="color:#d4d4d4"> </span><span style="color:#c586c0">from</span><span style="color:#d4d4d4"> </span><span style="color:#ce9178">&#x27;react-router-dom&#x27;</span></span><span style="color:#d4d4d4">;</span></div>
<div id="td4f1f853" class="t m" style="left:674.55px;top:233.57px;font-size:17.42px;color:#858588;font-weight:400;font-family:'Liberation Mono',monospace;transform:scaleY(1.1);transform-origin:0 13.36px;">2</div>
<div id="t7d29e57d" class="t m" style="left:722.30px;top:233.57px;font-size:17.42px;color:#d4d4d4;font-weight:400;font-family:'Liberation Mono',monospace;transform:scaleY(1.1);transform-origin:0 13.36px;"><span style="color:#c586c0">import</span><span style="color:#d4d4d4"> </span><span style="color:#ffd700">{</span><span style="color:#d4d4d4"> </span><span style="color:#9cdcfe">Hero</span><span style="color:#d4d4d4"> </span><span style="color:#ffd700">}</span><span style="color:#d4d4d4"> </span><span style="color:#c586c0">from</span><span style="color:#d4d4d4"> </span><span style="color:#ce9178">&#x27;@acme/ui&#x27;</span><span style="color:#d4d4d4">;</span></div>
<div id="tf0e933ca" class="t m" style="left:674.55px;top:259.60px;font-size:17.42px;color:#858588;font-weight:400;font-family:'Liberation Mono',monospace;transform:scaleY(1.1);transform-origin:0 13.36px;">3</div>
<div id="tb25be8de" class="t m" style="left:674.55px;top:285.63px;font-size:17.42px;color:#858588;font-weight:400;font-family:'Liberation Mono',monospace;transform:scaleY(1.1);transform-origin:0 13.36px;">4</div>
<div id="t3ae86b8c" class="t m" style="left:722.30px;top:285.63px;font-size:17.42px;color:#d4d4d4;font-weight:400;font-family:'Liberation Mono',monospace;transform:scaleY(1.1);transform-origin:0 13.36px;"><span style="color:#c586c0">export</span><span style="color:#d4d4d4"> </span><span style="color:#569cd6">function</span><span style="color:#d4d4d4"> </span><span style="color:#dcdcaa">App</span><span style="color:#ffd700">()</span><span style="color:#d4d4d4"> </span><span style="color:#ffd700">{</span></div>
<div id="t9011b941" class="t m" style="left:674.55px;top:311.66px;font-size:17.42px;color:#858588;font-weight:400;font-family:'Liberation Mono',monospace;transform:scaleY(1.1);transform-origin:0 13.36px;">5</div>
<div id="tb77c2951" class="t m" style="left:722.30px;top:311.66px;font-size:17.42px;color:#d4d4d4;font-weight:400;font-family:'Liberation Mono',monospace;transform:scaleY(1.1);transform-origin:0 13.36px;"><span style="color:#d4d4d4">  </span><span style="color:#c586c0">return</span><span style="color:#d4d4d4"> </span><span style="color:#da70d6">(</span></div>
<div id="tbcba12b2" class="t m" style="left:674.55px;top:337.69px;font-size:17.42px;color:#858588;font-weight:400;font-family:'Liberation Mono',monospace;transform:scaleY(1.1);transform-origin:0 13.36px;">6</div>
<div id="tae9bcdf8" class="t m" style="left:722.30px;top:337.69px;font-size:17.42px;color:#d4d4d4;font-weight:400;font-family:'Liberation Mono',monospace;transform:scaleY(1.1);transform-origin:0 13.36px;"><span style="color:#d4d4d4">    </span><span style="color:#d4d4d4">  </span></div>
<div id="t03b11289" class="t m" style="left:674.55px;top:363.72px;font-size:17.42px;color:#858588;font-weight:400;font-family:'Liberation Mono',monospace;transform:scaleY(1.1);transform-origin:0 13.36px;">7</div>
<div id="te556394c" class="t m" style="left:722.30px;top:363.72px;font-size:17.42px;color:#d4d4d4;font-weight:400;font-family:'Liberation Mono',monospace;transform:scaleY(1.1);transform-origin:0 13.36px;"><span style="color:#d4d4d4">      </span><span style="color:#808080">&lt;</span><span style="color:#569cd6">h1</span><span style="color:#808080">&gt;</span><span style="color:#d4d4d4">Home</span><span style="color:#d4d4d4">  </span><span style="color:#569cd6">h1</span><span style="color:#808080">&gt;</span></div>
<div id="t2815a696" class="t m" style="left:674.55px;top:389.75px;font-size:17.42px;color:#858588;font-weight:400;font-family:'Liberation Mono',monospace;transform:scaleY(1.1);transform-origin:0 13.36px;">8</div>
<div id="t18741c3f" class="t m" style="left:722.30px;top:389.75px;font-size:17.42px;color:#d4d4d4;font-weight:400;font-family:'Liberation Mono',monospace;transform:scaleY(1.1);transform-origin:0 13.36px;"><span style="color:#d4d4d4">      </span><span style="color:#808080">&lt;</span><span style="color:#4ec9b0">Hero</span></div>
<div id="ta83927e1" class="t m" style="left:674.55px;top:415.78px;font-size:17.42px;color:#858588;font-weight:400;font-family:'Liberation Mono',monospace;transform:scaleY(1.1);transform-origin:0 13.36px;">9</div>
<div id="tfd5abb36" class="t m" style="left:722.30px;top:415.78px;font-size:17.42px;color:#d4d4d4;font-weight:400;font-family:'Liberation Mono',monospace;transform:scaleY(1.1);transform-origin:0 13.36px;"><span style="color:#d4d4d4">        </span><span style="color:#9cdcfe">title</span><span style="color:#d4d4d4">=</span><span style="color:#ce9178">&quot;Welcome @acme/demo&quot;</span></div>
<div id="t6de4af4b" class="t m" style="left:664.10px;top:441.81px;font-size:17.42px;color:#858588;font-weight:400;font-family:'Liberation Mono',monospace;transform:scaleY(1.1);transform-origin:0 13.36px;">10</div>
<div id="t35fc6f83" class="t m" style="left:722.30px;top:441.81px;font-size:17.42px;color:#d4d4d4;font-weight:400;font-family:'Liberation Mono',monospace;transform:scaleY(1.1);transform-origin:0 13.36px;"><span style="color:#d4d4d4">        </span><span style="color:#9cdcfe">subtitle</span><span style="color:#d4d4d4">=</span><span style="color:#ce9178">&quot;Build something amazing today&quot;</span></div>
<div id="t68c81a0b" class="t m" style="left:664.10px;top:467.84px;font-size:17.42px;color:#858588;font-weight:400;font-family:'Liberation Mono',monospace;transform:scaleY(1.1);transform-origin:0 13.36px;">11</div>
<div id="t8d990949" class="t m" style="left:722.30px;top:467.84px;font-size:17.42px;color:#d4d4d4;font-weight:400;font-family:'Liberation Mono',monospace;transform:scaleY(1.1);transform-origin:0 13.36px;"><span style="color:#d4d4d4">        </span><span style="color:#9cdcfe">cta</span><span style="color:#d4d4d4">=</span><span style="color:#ce9178">&quot;Get Started&quot;</span></div>
<div id="tc3f36359" class="t m" style="left:664.10px;top:493.87px;font-size:17.42px;color:#858588;font-weight:400;font-family:'Liberation Mono',monospace;transform:scaleY(1.1);transform-origin:0 13.36px;">12</div>
<div id="t63544743" class="t m" style="left:722.30px;top:493.87px;font-size:17.42px;color:#d4d4d4;font-weight:400;font-family:'Liberation Mono',monospace;transform:scaleY(1.1);transform-origin:0 13.36px;"><span style="color:#d4d4d4">      </span><span style="color:#d4d4d4">  </span></div>
<div id="t2091ce48" class="t m" style="left:664.10px;top:519.90px;font-size:17.42px;color:#858588;font-weight:400;font-family:'Liberation Mono',monospace;transform:scaleY(1.1);transform-origin:0 13.36px;">13</div>
<div id="t3a5773eb" class="t m" style="left:722.30px;top:519.90px;font-size:17.42px;color:#d4d4d4;font-weight:400;font-family:'Liberation Mono',monospace;transform:scaleY(1.1);transform-origin:0 13.36px;"><span style="color:#d4d4d4">    </span><span style="color:#d4d4d4">   </span></div>
<div id="taff404f4" class="t m" style="left:664.10px;top:545.93px;font-size:17.42px;color:#858588;font-weight:400;font-family:'Liberation Mono',monospace;transform:scaleY(1.1);transform-origin:0 13.36px;">14</div>
<div id="t85510846" class="t m" style="left:722.30px;top:545.93px;font-size:17.42px;color:#d4d4d4;font-weight:400;font-family:'Liberation Mono',monospace;transform:scaleY(1.1);transform-origin:0 13.36px;"><span style="color:#d4d4d4">  </span><span style="color:#da70d6">)</span><span style="color:#d4d4d4">;</span></div>
<div id="tfc3906ba" class="t m" style="left:664.10px;top:571.96px;font-size:17.42px;color:#858588;font-weight:400;font-family:'Liberation Mono',monospace;transform:scaleY(1.1);transform-origin:0 13.36px;">15</div>
<div id="t04110bc5" class="t m" style="left:722.30px;top:571.96px;font-size:17.42px;color:#d4d4d4;font-weight:400;font-family:'Liberation Mono',monospace;transform:scaleY(1.1);transform-origin:0 13.36px;"><span style="color:#ffd700">}</span></div>
<div id="t9efe2da0" class="t m" style="left:664.10px;top:597.99px;font-size:17.42px;color:#858588;font-weight:400;font-family:'Liberation Mono',monospace;transform:scaleY(1.1);transform-origin:0 13.36px;">16</div>
<div id="tebfcd379" class="t m" style="left:664.10px;top:624.02px;font-size:17.42px;color:#c6c6c6;font-weight:400;font-family:'Liberation Mono',monospace;transform:scaleY(1.1);transform-origin:0 13.36px;">17</div>
<div id="t721ac7c1" class="t m" style="left:722.30px;top:624.02px;font-size:17.42px;color:#d4d4d4;font-weight:400;font-family:'Liberation Mono',monospace;transform:scaleY(1.1);transform-origin:0 13.36px;"><span style="color:#c586c0">export</span><span style="color:#d4d4d4"> </span><span style="color:#c586c0">default</span><span style="color:#d4d4d4"> </span><span style="color:#dcdcaa">App</span><span style="color:#d4d4d4">;</span></div>
<svg class="a" style="left:722px;top:221px;" width="512" height="8" viewBox="0 0 512 8" fill="none"><path d="M0 4 Q2.15 -0.20 4.30 4 T8.60 4 Q10.75 -0.20 12.90 4 T17.20 4 Q19.35 -0.20 21.50 4 T25.80 4 Q27.95 -0.20 30.10 4 T34.40 4 Q36.55 -0.20 38.70 4 T43.00 4 Q45.15 -0.20 47.30 4 T51.60 4 Q53.75 -0.20 55.90 4 T60.20 4 Q62.35 -0.20 64.50 4 T68.80 4 Q70.95 -0.20 73.10 4 T77.40 4 Q79.55 -0.20 81.70 4 T86.00 4 Q88.15 -0.20 90.30 4 T94.60 4 Q96.75 -0.20 98.90 4 T103.20 4 Q105.35 -0.20 107.50 4 T111.80 4 Q113.95 -0.20 116.10 4 T120.40 4 Q122.55 -0.20 124.70 4 T129.00 4 Q131.15 -0.20 133.30 4 T137.60 4 Q139.75 -0.20 141.90 4 T146.20 4 Q148.35 -0.20 150.50 4 T154.80 4 Q156.95 -0.20 159.10 4 T163.40 4 Q165.55 -0.20 167.70 4 T172.00 4 Q174.15 -0.20 176.30 4 T180.60 4 Q182.75 -0.20 184.90 4 T189.20 4 Q191.35 -0.20 193.50 4 T197.80 4 Q199.95 -0.20 202.10 4 T206.40 4 Q208.55 -0.20 210.70 4 T215.00 4 Q217.15 -0.20 219.30 4 T223.60 4 Q225.75 -0.20 227.90 4 T232.20 4 Q234.35 -0.20 236.50 4 T240.80 4 Q242.95 -0.20 245.10 4 T249.40 4 Q251.55 -0.20 253.70 4 T258.00 4 Q260.15 -0.20 262.30 4 T266.60 4 Q268.75 -0.20 270.90 4 T275.20 4 Q277.35 -0.20 279.50 4 T283.80 4 Q285.95 -0.20 288.10 4 T292.40 4 Q294.55 -0.20 296.70 4 T301.00 4 Q303.15 -0.20 305.30 4 T309.60 4 Q311.75 -0.20 313.90 4 T318.20 4 Q320.35 -0.20 322.50 4 T326.80 4 Q328.95 -0.20 331.10 4 T335.40 4 Q337.55 -0.20 339.70 4 T344.00 4 Q346.15 -0.20 348.30 4 T352.60 4 Q354.75 -0.20 356.90 4 T361.20 4 Q363.35 -0.20 365.50 4 T369.80 4 Q371.95 -0.20 374.10 4 T378.40 4 Q380.55 -0.20 382.70 4 T387.00 4 Q389.15 -0.20 391.30 4 T395.60 4 Q397.75 -0.20 399.90 4 T404.20 4 Q406.35 -0.20 408.50 4 T412.80 4 Q414.95 -0.20 417.10 4 T421.40 4 Q423.55 -0.20 425.70 4 T430.00 4 Q432.15 -0.20 434.30 4 T438.60 4 Q440.75 -0.20 442.90 4 T447.20 4 Q449.35 -0.20 451.50 4 T455.80 4 Q457.95 -0.20 460.10 4 T464.40 4 Q466.55 -0.20 468.70 4 T473.00 4 Q475.15 -0.20 477.30 4 T481.60 4 Q483.75 -0.20 485.90 4 T490.20 4 Q492.35 -0.20 494.50 4 T498.80 4 Q500.95 -0.20 503.10 4 T507.40 4 Q509.55 -0.20 511.70 4 T516.00 4" stroke="#d2ac0c" stroke-width="1.5" fill="none"/></svg>
<svg class="a" style="left:700px;top:330px;" width="250" height="220" viewBox="0 0 250 220" fill="none"><g stroke="#808080" stroke-width="1.8" stroke-linejoin="miter" stroke-linecap="butt" fill="none"><path d="M66.8 14.7 L74.9 9.6 L83.0 14.7 L74.9 19.9 L66.8 14.7"/><path d="M180.0 35.3 L171.0 41.5 L180.0 47.8 L186.6 30.3"/><path d="M88.2 178.6 L94.8 163.0 L104.4 171.0 L97.6 175.6"/><path d="M77.1 191.4 L68.3 196.8 L77.1 203.4 L84.5 188.7 L92.6 196.8 L85.2 201.7"/></g></svg>
<svg class="a" style="left:726px;top:592px;" width="18" height="22" viewBox="0 0 18 22" fill="none"><path d="M9 1.5a7 7 0 0 0-4.5 12.4c.8.7 1.3 1.6 1.3 2.6V18h6.4v-1.5c0-1 .5-1.9 1.3-2.6A7 7 0 0 0 9 1.5z" fill="#ffcc00"/><rect x="6" y="17.5" width="6" height="3.5" rx="1" fill="#ffcc00"/><rect x="7.6" y="17.8" width="2.8" height="1.8" fill="#1f1e22"/></svg>
<div id="t9b353efb" class="t m" style="left:994.80px;top:624.02px;font-size:17.42px;color:#9c9c9f;font-weight:400;font-family:'Liberation Mono',monospace;transform:scaleY(1.1);transform-origin:0 13.36px;">fix: correct typo in hero title from &quot;Welcmoe&quot; to …, nx-cloud[bot] (1 hour ago)</div>
<div class="a" style="left:1880px;top:0;width:101px;height:1424px;overflow:hidden">
<div class="t" style="left:0px;top:624.02px;font-size:17.42px;color:#5e5d61;font-family:'Liberation Mono',monospace">nx-cloud[bot]</div>
</div>
<div class="a" style="left:1960px;top:179px;width:1px;height:1123px;background:#2e2d31;"></div>
<div class="a" style="left:1974px;top:194px;width:7px;height:19px;background:#e2b40a;"></div>
<div class="a" style="left:1966px;top:250.5px;width:9px;height:19.5px;background:#c8a2c8;"></div>
<div class="a" style="left:1960px;top:493px;width:21px;height:3.5px;background:#9a9a9a;"></div>
<div class="a" style="left:1966px;top:496px;width:9px;height:18px;background:#9a9a9a;"></div>
<div class="a" style="left:66px;top:1302px;width:1915px;height:33px;background:#0078d4;"></div>
<div class="a" style="left:66px;top:1302px;width:51px;height:33px;background:#16825d;"></div>
<div class="a" style="left:1190px;top:1302px;width:48.5px;height:33px;background:#063f72;"></div>
<svg class="a" style="left:84px;top:1307px;" width="24" height="22" viewBox="0 0 24 22" fill="none"><g stroke="#ffffff" stroke-width="1.6" stroke-linecap="round" stroke-linejoin="round" fill="none"><path d="M1.8 9.1L7.6 13.85L1.8 18.6M14.2 1.8L8.4 6.9L14.2 12"/></g></svg>
<svg class="a" style="left:128px;top:1306px;" width="22" height="24" viewBox="0 0 22 24" fill="none"><g stroke="#ffffff" stroke-width="1.5" stroke-linecap="round" stroke-linejoin="round" fill="none"><circle cx="6" cy="4.5" r="2.7"/><circle cx="6" cy="19" r="2.7"/><circle cx="16" cy="9" r="2.7"/><path d="M6 7.2V16.3M16 11.7c0 3.5-3 4.3-6 4.3H6"/></g></svg>
<div id="tfc9db21c" class="t" style="left:153.80px;top:1309.96px;font-size:18px;color:#ffffff;font-weight:400;font-family:'Liberation Sans',sans-serif;letter-spacing:0.582px;">add-hero-component</div>
<svg class="a" style="left:338px;top:1308px;" width="22" height="20" viewBox="0 0 22 20" fill="none"><g stroke="#ffffff" stroke-width="1.4" stroke-linecap="round" stroke-linejoin="round" fill="none"><path d="M6.5 15.5H5.5a3.6 3.6 0 0 1-.3-7.2A5.2 5.2 0 0 1 15.3 7a4 4 0 0 1 .7 8.5h-1"/><path d="M10.8 18V10.5M8.3 13l2.5-2.5l2.5 2.5"/></g></svg>
<svg class="a" style="left:380px;top:1306px;" width="22" height="24" viewBox="0 0 22 24" fill="none"><g stroke="#ffffff" stroke-width="1.4" stroke-linecap="round" stroke-linejoin="round" fill="none"><circle cx="6.3" cy="5.7" r="2.4"/><circle cx="6.3" cy="18.2" r="2.4"/><circle cx="17.3" cy="11.5" r="2.4"/><path d="M6.3 8.1V15.8M11 3V21.5M17.3 13.9c0 3-1.3 4.8-3.5 5.5"/></g></svg>
<svg class="a" style="left:424px;top:1306px;" width="44" height="24" viewBox="0 0 44 24" fill="none"><g stroke="#ffffff" stroke-width="1.4" stroke-linecap="round" stroke-linejoin="round" fill="none"><path d="M4 17.5l-1.5 4L6.5 20M7.5 15C9.5 9 13.5 4.5 20.5 3c-1 7-5.5 11.5-11.5 13.5z"/><path d="M7 12.5L3.2 13l3.5-4.5M11 16.5l-.5 3.8l4.5-3.8"/><circle cx="15" cy="9" r="1.6"/><path d="M24.5 19.8l2.8-2.8M26.3 14.3l4.4 4.4l2.2-2.2a2.5 2.5 0 0 0 0-3.5l-.9-.9a2.5 2.5 0 0 0-3.5 0z M30.8 9.8l4.4 4.4l2.2-2.2a2.5 2.5 0 0 0 0-3.5l-.9-.9a2.5 2.5 0 0 0-3.5 0z M37.5 6.5l3-3"/></g></svg>
<div id="td1368b8b" class="t" style="left:471.70px;top:1309.96px;font-size:18px;color:#ffffff;font-weight:400;font-family:'Liberation Sans',sans-serif;letter-spacing:0.251px;">Launchpad</div>
<svg class="a" style="left:584px;top:1308px;" width="22" height="22" viewBox="0 0 22 22" fill="none"><g stroke="#ffffff" stroke-width="1.5" stroke-linecap="round" stroke-linejoin="round" fill="none"><circle cx="11" cy="11" r="8.5"/><path d="M7.8 7.8L14.2 14.2M14.2 7.8L7.8 14.2"/></g></svg>
<div id="tcf097bd4" class="t" style="left:611.30px;top:1309.96px;font-size:18px;color:#ffffff;font-weight:400;font-family:'Liberation Sans',sans-serif;letter-spacing:0.184px;">0</div>
<svg class="a" style="left:626px;top:1307px;" width="22" height="22" viewBox="0 0 22 22" fill="none"><g stroke="#ffffff" stroke-width="1.4" stroke-linecap="round" stroke-linejoin="round" fill="none"><path d="M10.5 2.8L18.6 17.8H1.4Z"/><path d="M10.5 9V13.8M10.5 15.9v.2"/></g></svg>
<div id="t052a1acd" class="t" style="left:652.10px;top:1309.96px;font-size:18px;color:#ffffff;font-weight:400;font-family:'Liberation Sans',sans-serif;letter-spacing:0.284px;">7</div>
<div id="t870c6c35" class="t" style="left:685.70px;top:1309.96px;font-size:18px;color:#ffffff;font-weight:400;font-family:'Liberation Sans',sans-serif;letter-spacing:0.300px;">Auto Attach: Always</div>
<div id="t4cc4619a" class="t" style="left:872.50px;top:1309.96px;font-size:18px;color:#ffffff;font-weight:400;font-family:'Liberation Sans',sans-serif;letter-spacing:0.588px;">-- NORMAL --</div>
<svg class="a" style="left:1203px;top:1306px;" width="24" height="24" viewBox="0 0 24 24" fill="none"><g stroke="#ffffff" stroke-width="1.6" stroke-linecap="round" stroke-linejoin="round" fill="none"><circle cx="10.3" cy="10" r="7.2"/><path d="M15.5 15.3L20.5 20.3"/><path d="M7 9.8h6.6" stroke-width="2.2"/></g></svg>
<div id="t2cb5d23d" class="t" style="left:1250.50px;top:1310.66px;font-size:18px;color:#ffffff;font-weight:400;font-family:'Liberation Sans',sans-serif;letter-spacing:0.360px;">Ln 17, Col 19</div>
<div id="tfa896771" class="t" style="left:1385.00px;top:1310.66px;font-size:18px;color:#ffffff;font-weight:400;font-family:'Liberation Sans',sans-serif;letter-spacing:0.042px;">Spaces: 2</div>
<div id="t6dd68817" class="t" style="left:1489.00px;top:1310.66px;font-size:18px;color:#ffffff;font-weight:400;font-family:'Liberation Sans',sans-serif;letter-spacing:0.700px;">UTF-8</div>
<div id="tc8e32f95" class="t" style="left:1565.20px;top:1310.66px;font-size:18px;color:#ffffff;font-weight:400;font-family:'Liberation Sans',sans-serif;letter-spacing:-0.716px;">LF</div>
<div id="tfc5dbd3f" class="t" style="left:1609.00px;top:1310.66px;font-size:18px;color:#ffffff;font-weight:400;font-family:'Liberation Sans',sans-serif;letter-spacing:0.834px;">{ }</div>
<div id="t332e5219" class="t" style="left:1637.70px;top:1310.66px;font-size:18px;color:#ffffff;font-weight:400;font-family:'Liberation Sans',sans-serif;letter-spacing:0.181px;">TypeScript JSX</div>
<svg class="a" style="left:1783px;top:1307px;" width="24" height="22" viewBox="0 0 24 22" fill="none"><path fill="#fff" d="M6 2.5c2-.3 3.8.3 5.5 1.8c1.7-1.5 3.5-2.1 5.5-1.8c2.1.4 3.1 2.2 2.8 4.6c1 .8 1.6 1.9 1.6 3.2v2.9c0 1.1-.5 2-1.5 2.6c-2.2 1.4-5 2.2-8.4 2.2s-6.2-.8-8.4-2.2c-1-.6-1.5-1.5-1.5-2.6v-2.9c0-1.3.6-2.4 1.6-3.2C3 4.7 4 2.9 6 2.5z"/><g fill="#0078d4"><rect x="5.2" y="4.8" width="4.5" height="3.6" rx="1.3"/><rect x="13.3" y="4.8" width="4.5" height="3.6" rx="1.3"/><path d="M4.8 11h13.4v3.8c-1.9 1-4.1 1.5-6.7 1.5s-4.8-.5-6.7-1.5z"/></g><g fill="#fff"><rect x="8.6" y="12" width="2" height="3.2" rx="1"/><rect x="12.4" y="12" width="2" height="3.2" rx="1"/></g></svg>
<svg class="a" style="left:1827px;top:1308px;" width="24" height="20" viewBox="0 0 24 20" fill="none"><g stroke="#ffffff" stroke-width="1.5" stroke-linecap="round" stroke-linejoin="round" fill="none"><path d="M2 11l4 4l9-11M10 14l1 1l9-11"/></g></svg>
<div id="t675c38ae" class="t" style="left:1854.20px;top:1310.66px;font-size:18px;color:#ffffff;font-weight:400;font-family:'Liberation Sans',sans-serif;letter-spacing:0.467px;">Prettier</div>
<svg class="a" style="left:1938px;top:1306px;" width="24" height="24" viewBox="0 0 24 24" fill="none"><g stroke="#ffffff" stroke-width="1.4" stroke-linecap="round" stroke-linejoin="round" fill="none"><path d="M5 18h12.5c-1-1.3-1.8-3-1.8-5.5V10.5a4.5 4.5 0 0 0-9 0v2c0 2.5-.7 4.2-1.7 5.5z"/><path d="M9.3 20.3a2 2 0 0 0 3.6 0"/></g></svg>
<svg class="a" style="left:1948px;top:1307px;" width="12" height="12" viewBox="0 0 12 12" fill="none"><circle cx="6" cy="5.7" r="3.8" fill="#fff" stroke="#0078d4" stroke-width="1.3"/></svg>
<div class="a" style="left:1315px;top:1136px;width:655px;height:156px;border-radius:5px;background:#2c2b2f;box-shadow:0 0 10px rgba(0,0,0,0.55);border:1px solid #323135;box-sizing:border-box"></div>
<svg class="a" style="left:1330px;top:1156px;" width="24" height="24" viewBox="0 0 24 24" fill="none"><circle cx="12" cy="12" r="10" stroke="#3794ff" stroke-width="1.7"/><circle cx="12" cy="7.3" r="1.3" fill="#3794ff"/><path d="M12 10.5V17" stroke="#3794ff" stroke-width="2"/></svg>
<div id="tac0ea3a7" class="t" style="left:1361.30px;top:1159.09px;font-size:19.5px;color:#d6d6d8;font-weight:400;font-family:'Liberation Sans',sans-serif;letter-spacing:0.196px;">CI Pipeline Execution for #add-hero-component has</div>
<div id="t85e62a60" class="t" style="left:1361.30px;top:1190.49px;font-size:19.5px;color:#d6d6d8;font-weight:400;font-family:'Liberation Sans',sans-serif;letter-spacing:0.491px;">completed</div>
<svg class="a" style="left:1891px;top:1157px;" width="22" height="22" viewBox="0 0 22 22" fill="none"><g stroke="#cfcfd1" stroke-width="1.6" stroke-linecap="round" stroke-linejoin="round" fill="none"><path d="M9.48 4.68 L9.74 1.58 L12.26 1.58 L12.52 4.68 L14.40 5.46 L16.76 3.45 L18.55 5.24 L16.54 7.60 L17.32 9.48 L20.42 9.74 L20.42 12.26 L17.32 12.52 L16.54 14.40 L18.55 16.76 L16.76 18.55 L14.40 16.54 L12.52 17.32 L12.26 20.42 L9.74 20.42 L9.48 17.32 L7.60 16.54 L5.24 18.55 L3.45 16.76 L5.46 14.40 L4.68 12.52 L1.58 12.26 L1.58 9.74 L4.68 9.48 L5.46 7.60 L3.45 5.24 L5.24 3.45 L7.60 5.46Z"/><circle cx="11" cy="11" r="2.6"/></g></svg>
<svg class="a" style="left:1931px;top:1160px;" width="17" height="17" viewBox="0 0 17 17" fill="none"><g stroke="#d4d4d6" stroke-width="1.6" stroke-linecap="round" stroke-linejoin="round" fill="none"><path d="M2.6 1.4L14.9 13.7M14.9 1.4L2.6 13.7"/></g></svg>
<div id="t71259132" class="t" style="left:1331.30px;top:1242.76px;font-size:18px;color:#c9c9cc;font-weight:400;font-family:'Liberation Sans',sans-serif;letter-spacing:0.107px;">Source: Nx Console</div>
<div class="a" style="left:1665px;top:1230.5px;width:139.5px;height:41px;border-radius:3px;background:#0f67b0"></div>
<div id="t6201d548" class="t" style="left:1680.70px;top:1242.26px;font-size:18px;color:#ffffff;font-weight:400;font-family:'Liberation Sans',sans-serif;letter-spacing:0.270px;">View Commit</div>
<div class="a" style="left:1818px;top:1230.5px;width:136.5px;height:41px;border-radius:3px;background:#3e3d42"></div>
<div id="t32ef6f55" class="t" style="left:1834.70px;top:1242.26px;font-size:18px;color:#ffffff;font-weight:400;font-family:'Liberation Sans',sans-serif;letter-spacing:0.116px;">View Results</div>
<div class="a" style="left:1823px;top:1276px;width:129px;height:34.5px;border-radius:4px;background:#262527;border:1px solid #474649;box-sizing:border-box"></div>
<svg class="a" style="left:1879px;top:1269px;" width="16" height="9" viewBox="0 0 16 9" fill="none"><path d="M0 8.5L8 0.8L16 8.5" fill="#262527" stroke="#474649" stroke-width="1"/></svg>
<div id="t36b334e4" class="t" style="left:1835.70px;top:1284.36px;font-size:18px;color:#d6d6d8;font-weight:400;font-family:'Liberation Sans',sans-serif;letter-spacing:0.116px;">View Results</div>
<div class="a" style="left:66px;top:44px;width:1915px;height:1291px;border-radius:12px;box-shadow:inset 0 0 0 1px rgba(120,120,125,0.45)"></div>
</div>
</body></html>
